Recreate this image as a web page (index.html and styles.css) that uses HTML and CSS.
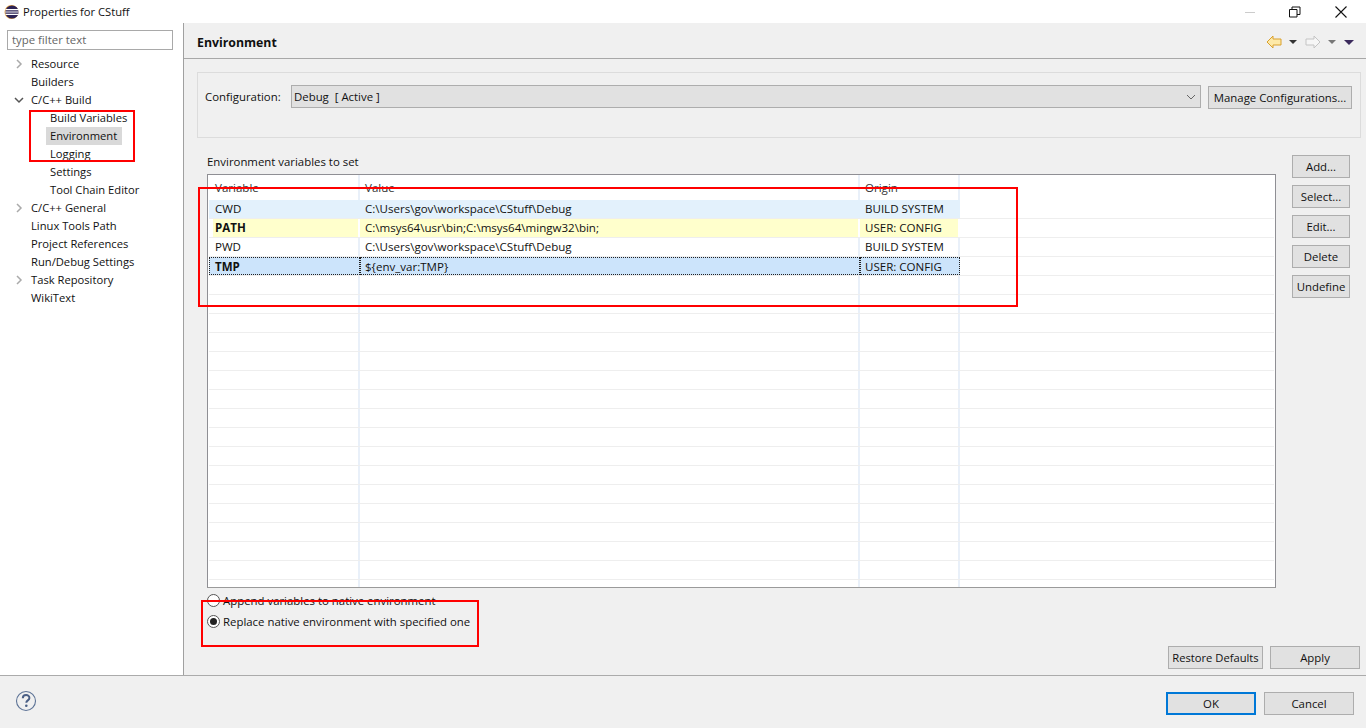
FILE: index.html
```html
<!DOCTYPE html>
<html lang="en">
<head>
<meta charset="UTF-8" />
<title>Properties for CStuff</title>
<link rel="stylesheet" href="styles.css">
</head>
<body>
<div class="titlebar">
  <svg class="app-icon" width="16" height="16" viewBox="0 0 16 16">
    <circle cx="7.5" cy="8" r="7" fill="#e8a33d"/>
    <circle cx="8" cy="8" r="6.6" fill="#2c2255"/>
    <path d="M1.5 5.6h13M1.2 8h13.6M1.5 10.4h13" stroke="#fff" stroke-width="1.2"/>
  </svg>
  <span class="title-text">Properties for CStuff</span>
  <div class="win-btns">
    <svg width="12" height="12" viewBox="0 0 12 12"><path d="M1 6.5h10" stroke="#ccc"/></svg>
    <svg width="12" height="12" viewBox="0 0 12 12"><path d="M.5 3.5h7.5v7.500h-7.500zM3 3.500V1h8v7.500H8" fill="none" stroke="#111"/></svg>
    <svg width="14" height="14" viewBox="0 0 14 14"><path d="M1.500 1.500l11 11M12.500 1.500l-11 11" stroke="#111" stroke-width="1.100"/></svg>
  </div>
</div>

<div class="main">
  <div class="sidebar">
    <input class="filter" type="text" placeholder="type filter text">
    <ul class="tree">
      <li><svg class="twisty" viewBox="0 0 10 10"><path d="M3 1l4 4-4 4" fill="none" stroke="#aaa" stroke-width="1.500"/></svg>Resource</li>
      <li class="no-twisty">Builders</li>
      <li><svg class="twisty" viewBox="0 0 10 10"><path d="M1 3l4 4 4-4" fill="none" stroke="#555" stroke-width="1.500"/></svg>C/C++ Build</li>
      <li class="child">Build Variables</li>
      <li class="child"><span class="selected">Environment</span></li>
      <li class="child">Logging</li>
      <li class="child">Settings</li>
      <li class="child">Tool Chain Editor</li>
      <li><svg class="twisty" viewBox="0 0 10 10"><path d="M3 1l4 4-4 4" fill="none" stroke="#aaa" stroke-width="1.500"/></svg>C/C++ General</li>
      <li class="no-twisty">Linux Tools Path</li>
      <li class="no-twisty">Project References</li>
      <li class="no-twisty">Run/Debug Settings</li>
      <li><svg class="twisty" viewBox="0 0 10 10"><path d="M3 1l4 4-4 4" fill="none" stroke="#aaa" stroke-width="1.500"/></svg>Task Repository</li>
      <li class="no-twisty">WikiText</li>
    </ul>
  </div>

  <div class="content">
    <div class="page-header">
      <h1>Environment</h1>
      <div class="nav-icons">
        <svg width="16" height="14" viewBox="0 0 16 14"><path d="M1 7l6-6v3h8v6H7v3z" fill="#fde9a8" stroke="#d9a02c"/></svg>
        <svg class="drop" width="8" height="4" viewBox="0 0 8 4"><path d="M0 0h8L4 4z" fill="#333"/></svg>
        <svg class="fwd" width="16" height="14" viewBox="0 0 16 14"><path d="M15 7L9 1v3H1v6h8v3z" fill="#f6f6f6" stroke="#c4c4c4"/></svg>
        <svg class="drop" width="8" height="4" viewBox="0 0 8 4"><path d="M0 0h8L4 4z" fill="#777"/></svg>
        <svg class="drop last" width="10" height="5" viewBox="0 0 10 5"><path d="M0 0h10L5 5z" fill="#3b2a5c"/></svg>
      </div>
    </div>

    <div class="config-group">
      <label class="config-label">Configuration:</label>
      <div class="select">
        <span>Debug  [ Active ]</span>
        <svg width="10" height="6" viewBox="0 0 10 6"><path d="M1 1l4 4 4-4" fill="none" stroke="#666"/></svg>
      </div>
      <button class="btn manage">Manage Configurations...</button>
    </div>

    <div class="env-area">
      <div class="env-left">
        <div class="env-label">Environment variables to set</div>
        <div class="table">
          <div class="row head"><div>Variable</div><div>Value</div><div>Origin</div><div></div></div>
          <div class="row hl-blue"><div>CWD</div><div>C:\Users\gov\workspace\CStuff\Debug</div><div>BUILD SYSTEM</div><div class="plain"></div></div>
          <div class="row hl-yellow"><div class="bold">PATH</div><div>C:\msys64\usr\bin;C:\msys64\mingw32\bin;</div><div>USER: CONFIG</div><div class="plain"></div></div>
          <div class="row"><div>PWD</div><div>C:\Users\gov\workspace\CStuff\Debug</div><div>BUILD SYSTEM</div><div class="plain"></div></div>
          <div class="row sel"><div class="bold">TMP</div><div>${env_var:TMP}</div><div>USER: CONFIG</div><div class="plain"></div></div>
          <div class="row"><div></div><div></div><div></div><div></div></div>
          <div class="row"><div></div><div></div><div></div><div></div></div>
          <div class="row"><div></div><div></div><div></div><div></div></div>
          <div class="row"><div></div><div></div><div></div><div></div></div>
          <div class="row"><div></div><div></div><div></div><div></div></div>
          <div class="row"><div></div><div></div><div></div><div></div></div>
          <div class="row"><div></div><div></div><div></div><div></div></div>
          <div class="row"><div></div><div></div><div></div><div></div></div>
          <div class="row"><div></div><div></div><div></div><div></div></div>
          <div class="row"><div></div><div></div><div></div><div></div></div>
          <div class="row"><div></div><div></div><div></div><div></div></div>
          <div class="row"><div></div><div></div><div></div><div></div></div>
          <div class="row"><div></div><div></div><div></div><div></div></div>
          <div class="row"><div></div><div></div><div></div><div></div></div>
          <div class="row"><div></div><div></div><div></div><div></div></div>
          <div class="row"><div></div><div></div><div></div><div></div></div>
          <div class="row last"><div></div><div></div><div></div><div></div></div>
        </div>
      </div>
      <div class="env-buttons">
        <button class="btn">Add...</button>
        <button class="btn">Select...</button>
        <button class="btn">Edit...</button>
        <button class="btn">Delete</button>
        <button class="btn">Undefine</button>
      </div>
    </div>

    <div class="radios">
      <div class="radio-row"><span class="radio"></span>Append variables to native environment</div>
      <div class="radio-row"><span class="radio on"></span>Replace native environment with specified one</div>
    </div>

    <div class="page-buttons">
      <button class="btn restore">Restore Defaults</button>
      <button class="btn apply">Apply</button>
    </div>
  </div>
</div>

<div class="footer">
  <svg class="help" width="22" height="22" viewBox="0 0 22 22">
    <circle cx="11" cy="11" r="9.500" fill="none" stroke="#5d7396" stroke-width="1.100"/>
    <path d="M7.800 8.300c0-4.200 6.600-4.200 6.600-.300 0 2.400-3.100 2.400-3.100 4.700" fill="none" stroke="#4a5f85" stroke-width="2"/>
    <circle cx="11.300" cy="15.800" r="1.300" fill="#4a5f85"/>
  </svg>
  <div class="footer-btns">
    <button class="btn ok">OK</button>
    <button class="btn cancel">Cancel</button>
  </div>
</div>

<!-- red annotations drawn on top of the screenshot -->
<div class="mark mark-tree"></div>
<div class="mark mark-table"></div>
<div class="mark mark-radio"></div>
</body>
</html>
```

FILE: styles.css
```css
* { box-sizing: border-box; }
html, body { height: 100%; }
body {
  margin: 0;
  position: relative;
  overflow: hidden;
  display: flex;
  flex-direction: column;
  height: 728px;
  background: #f0f0f0;
  color: #111;
  font-family: "Open Sans", "Noto Sans", sans-serif;
  font-size: 11.400px;
}

.titlebar {
  height: 23px;
  flex: none;
  background: #fff;
  display: flex;
  align-items: center;
  padding-left: 4px;
}
.app-icon { margin-right: 3px; }
.title-text { font-size: 11.200px; }
.win-btns {
  margin-left: auto;
  display: flex;
  align-items: center;
  gap: 33px;
  padding-right: 18px;
}

.main { flex: none; height: 652px; display: flex; }

.sidebar {
  width: 184px;
  flex: none;
  background: #fff;
  border-right: 1px solid #a0a0a0;
  padding: 7px 10px 0 7px;
}
.filter {
  display: block;
  width: 166px;
  height: 20px;
  border: 1px solid #a9a9a9;
  padding: 0 4px 2px;
  font: inherit;
  outline: none;
}
.filter::placeholder { color: #666; opacity: 1; }
.tree { list-style: none; margin: 5px 0 0; padding: 0; font-size: 11.200px; }
.tree li {
  height: 18px;
  line-height: 18px;
  display: flex;
  align-items: center;
  white-space: nowrap;
}
.tree .no-twisty { padding-left: 24px; }
.tree .child { padding-left: 43px; }
.twisty { width: 10px; height: 10px; margin: 0 7px 0 7px; flex: none; }
.selected {
  background: #d9d9d9;
  margin-left: -4px;
  padding: 0 4px;
  width: 76px;
  display: block;
}

.content { flex: 1; display: flex; flex-direction: column; min-width: 0; }

.page-header {
  height: 36px;
  flex: none;
  border-bottom: 1px solid #a8a8a8;
  display: flex;
  align-items: center;
  padding: 3px 12px 0 13px;
}
.page-header h1 { margin: 0; font-size: 12.300px; font-weight: 700; }
.nav-icons { margin-left: auto; display: flex; align-items: center; }
.nav-icons .drop { margin-left: 7px; }
.nav-icons .fwd { margin-left: 8px; }
.nav-icons .last { margin-left: 8px; }

.config-group {
  height: 66px;
  flex: none;
  margin: 13px 5px 0 13px;
  border: 1px solid #dcdcdc;
  display: flex;
  align-items: flex-start;
  padding: 12px 8px 0 7px;
}
.config-label { width: 86px; flex: none; line-height: 24px; }
.select {
  flex: 1;
  height: 23px;
  background: #e1e1e1;
  border: 1px solid #adadad;
  display: flex;
  align-items: center;
  justify-content: space-between;
  padding: 0 4px 0 2px;
  white-space: pre;
}
.btn {
  font: inherit;
  color: #111;
  height: 23px;
  padding: 0;
  background: #e1e1e1;
  border: 1px solid #adadad;
  border-radius: 0;
  white-space: nowrap;
}
.manage { width: 144px; margin-left: 7px; flex: none; margin-top: 1px; }

.env-area { display: flex; flex: none; margin-top: 16px; }
.env-left { width: 1069px; margin-left: 23px; flex: none; }
.env-label { height: 20px; line-height: 16px; }
.table {
  height: 414px;
  background: #fff;
  border: 1px solid #8f8f94;
  border-bottom-color: #9a9a9a;
  padding: 0 1px;
  overflow: hidden;
  font-size: 11.550px;
}
.row {
  display: grid;
  grid-template-columns: 151px 500px 100px 1fr;
  height: 19px;
  line-height: 18px;
  border-bottom: 1px solid #eeeeee;
}
.row.head { height: 25px; line-height: 26px; border-bottom: none; color: #333; }
.row.last { border-bottom: none; }
.row > div {
  border-right: 2px solid #e9f0f9;
  padding-left: 5px;
  white-space: nowrap;
  overflow: hidden;
}
.row > div:first-child { padding-left: 6px; }
.row > div:last-child { border-right: none; }
.bold { font-weight: 700; }
.row.hl-blue > div { background: #e3f1fc; border-right-color: #e3f1fc; }
.row.hl-yellow > div { background: #ffffcc; border-right-color: #fff; }
.row.hl-yellow > div:first-child { margin-left: 4px; padding-left: 2px; }
.row.sel > div { background: #cce4fb; border: 1px dotted #222; padding-left: 4px; }
.row.sel > div:first-child { padding-left: 5px; }
.row > .plain { background: #fff !important; border: none !important; }

.env-buttons {
  width: 58px;
  margin-left: 16px;
  margin-top: 1px;
  display: flex;
  flex-direction: column;
  gap: 7px;
}

.radios { margin: 0 0 0 23px; flex: none; height: 52px; padding-top: 2px; }
.radio-row { display: flex; align-items: center; height: 21px; }
.radio {
  width: 13px;
  height: 13px;
  border-radius: 50%;
  background: #fff;
  border: 1px solid #555;
  margin-right: 3px;
  flex: none;
  position: relative;
}
.radio.on::after {
  content: "";
  position: absolute;
  left: 2px;
  top: 2px;
  width: 7px;
  height: 7px;
  border-radius: 50%;
  background: #222;
}

.page-buttons {
  display: flex;
  justify-content: flex-end;
  gap: 7px;
  padding-right: 6px;
  margin-top: 6px;
}
.restore { width: 95px; font-size: 11.200px; }
.apply { width: 90px; }

.footer {
  flex: 1;
  border-top: 1px solid #ababab;
  display: flex;
  align-items: flex-start;
  justify-content: space-between;
  padding: 16px 12px 0 15px;
}
.help { margin-top: -2px; }
.footer-btns { display: flex; gap: 8px; }
.ok { width: 90px; border: 2px solid #0078d7; }
.cancel { width: 90px; }

.mark { position: absolute; border: 2px solid #ff0000; pointer-events: none; }
.mark-tree { left: 29px; top: 110px; width: 106px; height: 52px; }
.mark-table { left: 198px; top: 187px; width: 820px; height: 120px; }
.mark-radio { left: 201px; top: 600px; width: 278px; height: 47px; }
```
